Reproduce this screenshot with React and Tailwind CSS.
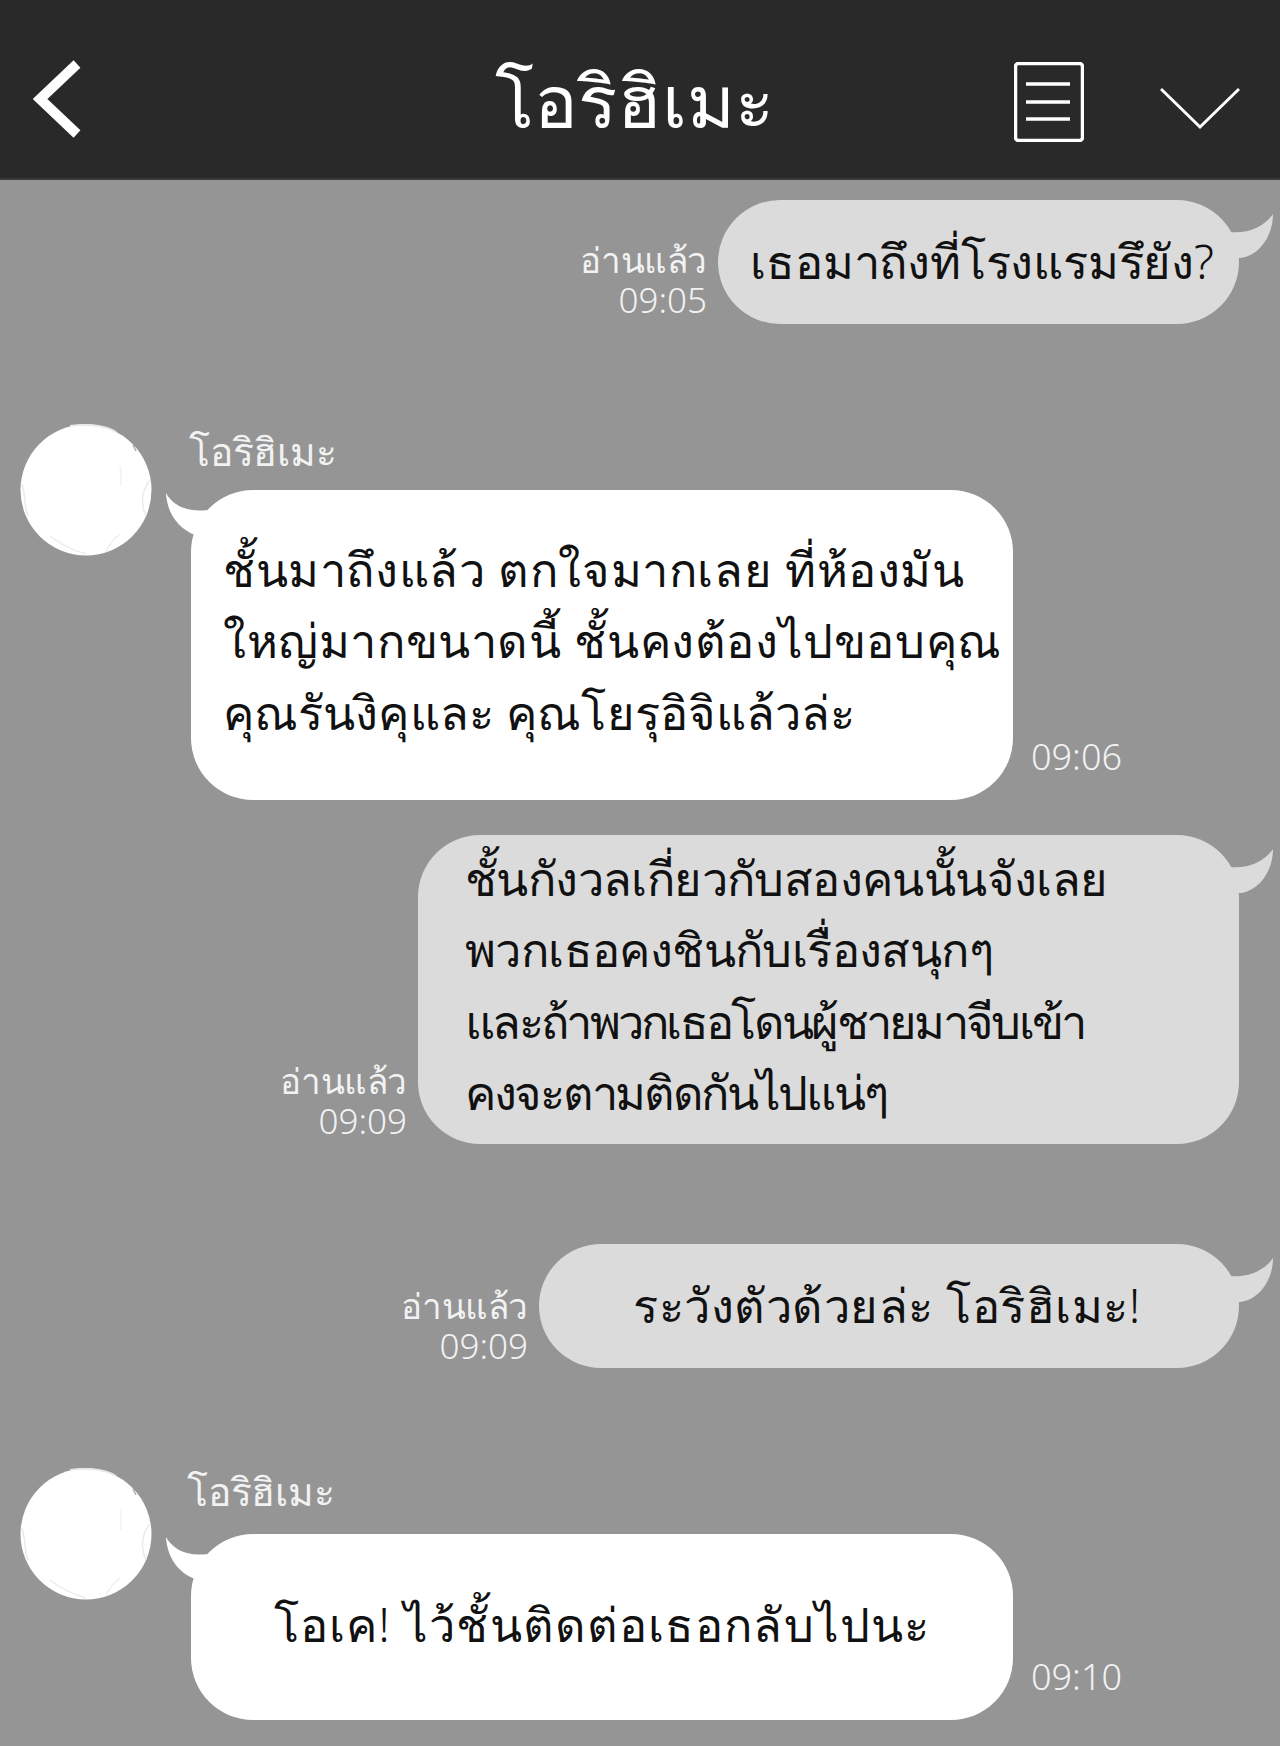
function TailRight() {
  return (
    <svg className="absolute right-[-36px] top-[6px]" width="62" height="62" viewBox="0 0 62 62" aria-hidden="true">
      <path d="M4 30 L17 26 C 35 28 52 20 60 8 C 60 30 46 50 27 52 L4 52 Z" fill="#dbdbdb" />
    </svg>
  );
}

function TailLeft() {
  return (
    <svg className="absolute left-[-26px] top-[2px]" width="62" height="62" viewBox="0 0 62 62" aria-hidden="true">
      <path d="M1 1 C 8 14 24 22 48 17 L 60 50 L 30 43 C 12 36 2 20 1 1 Z" fill="#ffffff" />
    </svg>
  );
}

function Avatar() {
  return (
    <svg width="132" height="132" viewBox="0 0 132 132" className="block shrink-0" aria-hidden="true">
      <circle cx="66" cy="66" r="65.5" fill="#ffffff" />
      <path d="M50 2 C 62 0 84 0 96 8" fill="none" stroke="#e8e8e8" strokeWidth="2" />
      <path d="M113 21 L116 27" fill="none" stroke="#b0b0b0" strokeWidth="1.5" />
      <path d="M100 42 C 102 50 100 56 101 62" fill="none" stroke="#f2f2f2" strokeWidth="1.5" />
      <path d="M130 56 C 122 66 120 78 126 92" fill="none" stroke="#ebebeb" strokeWidth="1.5" />
      <path d="M2 60 C 6 72 4 84 8 92" fill="none" stroke="#ebebeb" strokeWidth="1.5" />
      <path d="M30 112 C 40 120 52 126 66 130" fill="none" stroke="#ececec" strokeWidth="1.5" />
      <path d="M100 110 C 92 116 88 122 86 128" fill="none" stroke="#efefef" strokeWidth="1.5" />
    </svg>
  );
}

function Sent({ width, height, px, center, gap, mt, read, children }) {
  return (
    <div className={mt + " flex justify-end items-end pr-[41px]"}>
      <div className={gap + " flex flex-col items-end text-[#f2f2f2] text-[35px] leading-[40px] font-light"}>
        <span className="tracking-[-0.4px]">อ่านแล้ว</span>
        <span>{read}</span>
      </div>
      <div className={width + " " + height + " " + px + " " + (center ? "justify-center items-center " : "justify-center ") + "relative ml-[11px] flex flex-col rounded-[62px] bg-[#dbdbdb] text-[#111111] text-[47px] leading-[71.5px] font-light"}>
        <TailRight />
        {children}
      </div>
    </div>
  );
}

function Received({ mt, height, time, nameClass, bodyClass, children }) {
  return (
    <div className={mt + " flex pl-[20px]"}>
      <div className="mt-[1px]">
        <Avatar />
      </div>
      <div className="ml-[39px] flex flex-col">
        <div className={nameClass + " h-[67px] text-[#f2f2f2] text-[39px] tracking-[-0.2px] font-light"}>โอริฮิเมะ</div>
        <div className="flex items-end">
          <div className={height + " " + bodyClass + " relative w-[822px] flex flex-col justify-center rounded-[62px] bg-white text-[#111111] text-[47px] leading-[71.5px] font-light"}>
            <TailLeft />
            {children}
          </div>
          <span className="mb-[23px] ml-[18px] text-[#f2f2f2] text-[36px] leading-[40px] font-light">{time}</span>
        </div>
      </div>
    </div>
  );
}

export default function App() {
  return (
    <div className="w-[1280px] h-[1746px] overflow-hidden bg-[#959595] font-['Noto_Sans',sans-serif]">
      <header className="h-[180px] bg-[#292929] border-b-2 border-[#3a3a3a] flex items-center pt-[22px] pl-[33px] pr-[40px] text-white">
        <svg width="48" height="78" viewBox="0 0 48 78" className="shrink-0 mt-[-2px]" aria-hidden="true">
          <path d="M44 4 L7 39 L44 74" fill="none" stroke="#ffffff" strokeWidth="10" />
        </svg>
        <div className="ml-[414px] w-[280px] text-[73px] leading-[90px] font-light whitespace-nowrap">โอริฮิเมะ</div>
        <svg width="70" height="80" viewBox="0 0 70 80" className="ml-[240px] shrink-0 mt-[4px]" aria-hidden="true">
          <rect x="1.5" y="1.5" width="67" height="77" rx="3" fill="none" stroke="#ffffff" strokeWidth="3.5" />
          <path d="M12 22 H56 M12 40 H56 M12 57 H56" stroke="#ffffff" strokeWidth="3.5" />
        </svg>
        <svg width="80" height="44" viewBox="0 0 80 44" className="ml-[76px] shrink-0 mt-[16px]" aria-hidden="true">
          <path d="M1 3 L40 41 L79 3" fill="none" stroke="#ffffff" strokeWidth="3" />
        </svg>
      </header>

      <Sent mt="mt-[20px]" width="w-[521px]" height="h-[124px]" px="pl-[7px]" center gap="mb-[4px]" read="09:05">
        <span className="whitespace-nowrap tracking-[-0.2px]">เธอมาถึงที่โรงแรมรึยัง?</span>
      </Sent>

      <Received mt="mt-[99px]" height="h-[310px]" time="09:06" nameClass="ml-[-2px] leading-[56px]" bodyClass="px-[32px] pb-[8px]">
        <span className="whitespace-nowrap tracking-[0.6px]">ชั้นมาถึงแล้ว ตกใจมากเลย ที่ห้องมัน</span>
        <span className="whitespace-nowrap tracking-[0.6px]">ใหญ่มากขนาดนี้ ชั้นคงต้องไปขอบคุณ</span>
        <span className="whitespace-nowrap tracking-[0.1px]">คุณรันงิคุและ คุณโยรุอิจิแล้วล่ะ</span>
      </Received>

      <Sent mt="mt-[35px]" width="w-[821px]" height="h-[309px]" px="px-[47px] pb-[8px]" gap="mb-[3px]" read="09:09">
        <span className="whitespace-nowrap tracking-[-0.6px]">ชั้นกังวลเกี่ยวกับสองคนนั้นจังเลย</span>
        <span className="whitespace-nowrap tracking-[-0.6px]">พวกเธอคงชินกับเรื่องสนุกๆ</span>
        <span className="whitespace-nowrap tracking-[-2.7px]">และถ้าพวกเธอโดนผู้ชายมาจีบเข้า</span>
        <span className="whitespace-nowrap tracking-[-2.3px]">คงจะตามติดกันไปแน่ๆ</span>
      </Sent>

      <Sent mt="mt-[100px]" width="w-[700px]" height="h-[124px]" px="pr-[4px]" center gap="mb-[2px]" read="09:09">
        <span className="whitespace-nowrap tracking-[0.5px]">ระวังตัวด้วยล่ะ โอริฮิเมะ!</span>
      </Sent>

      <Received mt="mt-[99px]" height="h-[186px]" time="09:10" nameClass="ml-[-4px] leading-[47px]" bodyClass="items-center pb-[4px]">
        <span className="whitespace-nowrap tracking-[1.1px]">โอเค! ไว้ชั้นติดต่อเธอกลับไปนะ</span>
      </Received>
    </div>
  );
}
